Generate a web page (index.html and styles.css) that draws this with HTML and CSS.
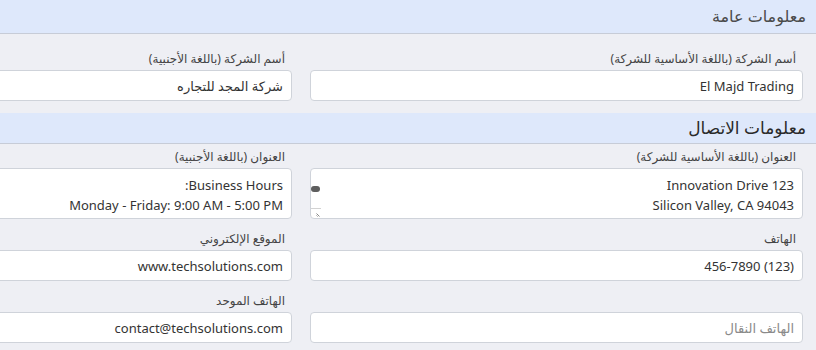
FILE: index.html
```html
<!DOCTYPE html>
<html dir="rtl" lang="ar">
	<head>
		<meta charset="UTF-8">
		<title>بيانات الشركة</title>
		<link rel="stylesheet" href="styles.css">
	</head>
	<body>
		<div class="page">
			<div class="section-head head-general">معلومات عامة</div>
			<div class="section-body body-general">
				<div class="grid">
					<div class="field">
						<label>أسم الشركة (باللغة الأساسية للشركة)</label>
						<input type="text" value="El Majd Trading">
					</div>
					<div class="field">
						<label>أسم الشركة (باللغة الأجنبية)</label>
						<input type="text" value="شركة المجد للتجاره">
					</div>
				</div>
			</div>

			<div class="section-head head-contact">معلومات الاتصال</div>
			<div class="section-body">
				<div class="grid">
					<div class="field">
						<label>العنوان (باللغة الأساسية للشركة)</label>
						<div class="ta-wrap">
							<textarea rows="2">123 Innovation Drive
Silicon Valley, CA 94043</textarea>
							<span class="ta-thumb"></span>
							<span class="ta-corner">
								<svg width="5" height="5" viewBox="0 0 5 5">
									<path d="M0.5 1.5 L3.5 4.5 M0.5 3.5 L1.5 4.5" stroke="#7a7a7a" stroke-width="0.9" fill="none"/>
								</svg>
							</span>
						</div>
					</div>
					<div class="field">
						<label>العنوان (باللغة الأجنبية)</label>
						<div class="ta-wrap">
							<textarea rows="2">Business Hours:
Monday - Friday: 9:00 AM - 5:00 PM</textarea>
						</div>
					</div>
					<div class="field">
						<label>الهاتف</label>
						<input type="text" value="(123) 456-7890">
					</div>
					<div class="field">
						<label>الموقع الإلكتروني</label>
						<input type="text" value="www.techsolutions.com">
					</div>
					<div class="field">
						<label class="empty"></label>
						<input type="text" placeholder="الهاتف النقال">
					</div>
					<div class="field">
						<label>الهاتف الموحد</label>
						<input type="text" value="contact@techsolutions.com">
					</div>
				</div>
			</div>
		</div>
	</body>
</html>
```

FILE: styles.css
```css
*{
	padding: 0px;margin: 0px;
	box-sizing: border-box;
}
html{
	overflow: hidden;
}
body{
	background: #eeeff4;
	font-family: "Segoe UI", "Noto Sans", "DejaVu Sans", sans-serif;
	color: #333;
	direction: rtl;
}
.section-head{
	background: #dee8fb;
	border-bottom: 1px solid #c7ccd7;
	padding-right: 10px;
}
.head-general{
	height: 34px;
	line-height: 32px;
	font-size: 16px;
	color: #4a4a4a;
}
.head-contact{
	height: 31px;
	line-height: 30px;
	font-size: 17px;
	color: #2a2a2a;
}
.section-body{
	padding: 4px 13px 12px 0px;
}
.body-general{
	padding-top: 16px;
}
.grid{
	display: grid;
	grid-template-columns: 493px 493px;
	column-gap: 18px;
	row-gap: 11px;
}
.field label{
	display: block;
	height: 18px;
	line-height: 18px;
	margin-bottom: 2px;
	padding-right: 7px;
	font-size: 12px;
	color: #444;
}
.field input,
.field textarea{
	display: block;
	width: 100%;
	background: #fff;
	border: 1px solid #cfd3da;
	border-radius: 4px;
	font-family: inherit;
	font-size: 13px;
	color: #333;
	outline: none;
}
.field input{
	height: 31px;
	padding: 0px 8px;
}
.field input::placeholder{
	color: #8a8a8a;
}
.field textarea{
	height: 51px;
	line-height: 20px;
	padding: 6px 8px 3px;
	resize: none;
	overflow: hidden;
}
.ta-wrap{
	position: relative;
}
.ta-thumb{
	position: absolute;
	left: 1px;top: 18px;
	width: 9px;height: 6px;
	border-radius: 3px;
	background: #5e5e5e;
}
.ta-corner{
	position: absolute;
	left: 1px;bottom: 1px;
	width: 10px;height: 10px;
	border-top: 1px solid #d2d2d2;
	display: flex;
	align-items: flex-end;
	padding: 0px 0px 1px 1px;
}
.ta-corner svg{
	display: block;
}
```
